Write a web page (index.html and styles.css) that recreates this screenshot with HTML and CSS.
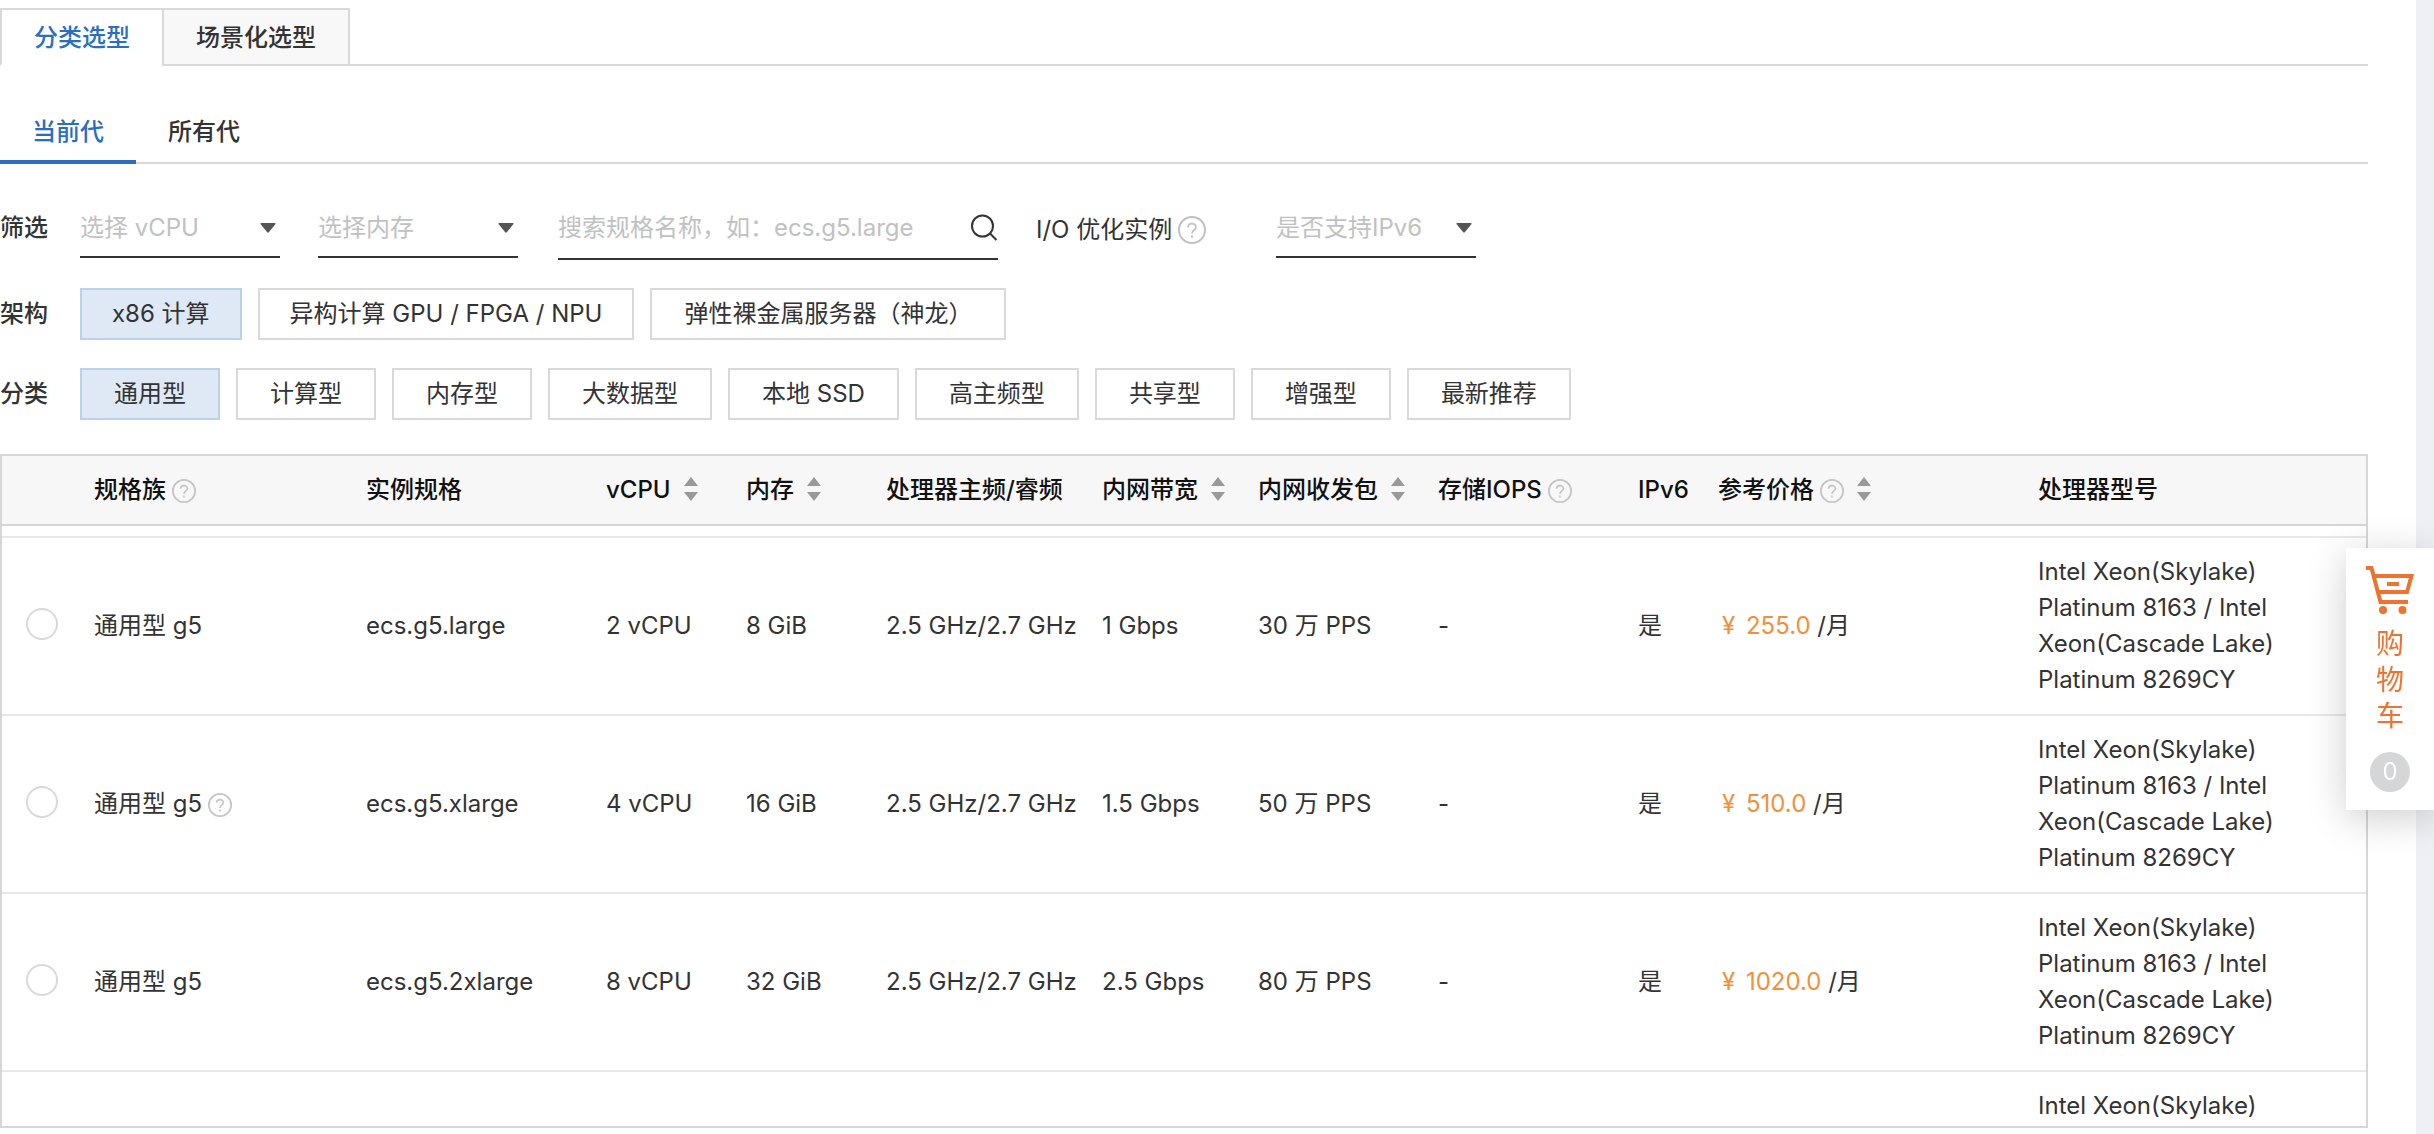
FILE: index.html
```html
<!DOCTYPE html>
<html lang="zh-CN">
<head>
<meta charset="utf-8">
<meta name="viewport" content="width=device-width, initial-scale=1">
<title>实例规格</title>
<link rel="stylesheet" href="styles.css">
</head>
<body>
<svg width="0" height="0" class="sprite" aria-hidden="true">
  <symbol id="help" viewBox="0 0 28 28">
    <circle cx="14" cy="14" r="13" fill="none" stroke="currentColor" stroke-width="2"/>
    <path d="M10 11.5C10 6.500 18 6.500 18 11.200C18 14 14 14 14 17.500" fill="none" stroke="currentColor" stroke-width="1.800"/>
    <circle cx="14" cy="20.500" r="1.200" fill="currentColor"/>
  </symbol>
  <symbol id="sort" viewBox="0 0 14 24">
    <path d="M7 0L14 9H0ZM7 24L0 15H14Z" fill="currentColor"/>
  </symbol>
  <symbol id="caret" viewBox="0 0 16 10">
    <path d="M1 0H15Q16 0 15.500 1L9 9Q8 10.500 7 9L0.500 1Q0 0 1 0Z" fill="currentColor"/>
  </symbol>
</svg>

<main class="page">
  <nav class="tabs">
    <button class="tab tab-active" type="button">分类选型</button>
    <button class="tab" type="button">场景化选型</button>
  </nav>
  <nav class="subtabs">
    <button class="subtab subtab-active" type="button">当前代</button>
    <button class="subtab" type="button">所有代</button>
  </nav>

  <section class="filters">
    <div class="row row-filter">
      <label class="row-label" for="vcpu">筛选</label>
      <div class="select">
        <select id="vcpu"><option>选择 vCPU</option></select>
        <svg class="caret"><use href="#caret"/></svg>
      </div>
      <div class="select">
        <select aria-label="选择内存"><option>选择内存</option></select>
        <svg class="caret"><use href="#caret"/></svg>
      </div>
      <div class="search">
        <input type="text" placeholder="搜索规格名称，如：ecs.g5.large" aria-label="搜索规格名称">
        <button class="search-button" type="button" aria-label="搜索">
          <svg width="28" height="28" viewBox="0 0 28 28" fill="none" stroke="#333" stroke-width="2"><circle cx="12.500" cy="12" r="10.500"/><path d="M20 19.500L26.500 26"/></svg>
        </button>
      </div>
      <div class="io">I/O 优化实例<svg class="help-lg"><use href="#help"/></svg></div>
      <div class="select">
        <select aria-label="是否支持IPv6"><option>是否支持IPv6</option></select>
        <svg class="caret"><use href="#caret"/></svg>
      </div>
    </div>
    <div class="row">
      <span class="row-label">架构</span>
      <div class="chips">
        <button class="chip chip-mixed chip-active" type="button">x86 计算</button>
        <button class="chip chip-mixed" type="button">异构计算 GPU / FPGA / NPU</button>
        <button class="chip" type="button">弹性裸金属服务器（神龙）</button>
      </div>
    </div>
    <div class="row">
      <span class="row-label">分类</span>
      <div class="chips">
        <button class="chip chip-active" type="button">通用型</button>
        <button class="chip" type="button">计算型</button>
        <button class="chip" type="button">内存型</button>
        <button class="chip" type="button">大数据型</button>
        <button class="chip" type="button">本地 SSD</button>
        <button class="chip" type="button">高主频型</button>
        <button class="chip" type="button">共享型</button>
        <button class="chip" type="button">增强型</button>
        <button class="chip" type="button">最新推荐</button>
      </div>
    </div>
  </section>

  <div class="table-box">
    <table class="specs">
      <colgroup>
        <col class="c-radio"><col class="c-family"><col class="c-spec"><col class="c-small"><col class="c-small"><col class="c-freq"><col class="c-band"><col class="c-pps"><col class="c-iops"><col class="c-ipv6"><col class="c-price"><col>
      </colgroup>
      <thead>
        <tr>
          <th></th>
          <th>规格族<svg class="help"><use href="#help"/></svg></th>
          <th>实例规格</th>
          <th>vCPU<svg class="sort"><use href="#sort"/></svg></th>
          <th>内存<svg class="sort"><use href="#sort"/></svg></th>
          <th>处理器主频/睿频</th>
          <th>内网带宽<svg class="sort"><use href="#sort"/></svg></th>
          <th>内网收发包<svg class="sort"><use href="#sort"/></svg></th>
          <th>存储IOPS<svg class="help"><use href="#help"/></svg></th>
          <th>IPv6</th>
          <th>参考价格<svg class="help"><use href="#help"/></svg><svg class="sort"><use href="#sort"/></svg></th>
          <th>处理器型号</th>
        </tr>
      </thead>
      <tbody>
        <tr class="row-edge"><td colspan="12"></td></tr>
        <tr>
          <td><input type="radio" name="spec" aria-label="ecs.g5.large"></td>
          <td>通用型 g5</td>
          <td>ecs.g5.large</td>
          <td>2 vCPU</td>
          <td>8 GiB</td>
          <td>2.5 GHz/2.7 GHz</td>
          <td>1 Gbps</td>
          <td>30 万 PPS</td>
          <td>-</td>
          <td>是</td>
          <td><span class="price"><span class="yen">¥</span> 255.0</span> /月</td>
          <td class="cpu">Intel Xeon(Skylake) Platinum 8163 / Intel Xeon(Cascade Lake) Platinum 8269CY</td>
        </tr>
        <tr>
          <td><input type="radio" name="spec" aria-label="ecs.g5.xlarge"></td>
          <td>通用型 g5<svg class="help"><use href="#help"/></svg></td>
          <td>ecs.g5.xlarge</td>
          <td>4 vCPU</td>
          <td>16 GiB</td>
          <td>2.5 GHz/2.7 GHz</td>
          <td>1.5 Gbps</td>
          <td>50 万 PPS</td>
          <td>-</td>
          <td>是</td>
          <td><span class="price"><span class="yen">¥</span> 510.0</span> /月</td>
          <td class="cpu">Intel Xeon(Skylake) Platinum 8163 / Intel Xeon(Cascade Lake) Platinum 8269CY</td>
        </tr>
        <tr>
          <td><input type="radio" name="spec" aria-label="ecs.g5.2xlarge"></td>
          <td>通用型 g5</td>
          <td>ecs.g5.2xlarge</td>
          <td>8 vCPU</td>
          <td>32 GiB</td>
          <td>2.5 GHz/2.7 GHz</td>
          <td>2.5 Gbps</td>
          <td>80 万 PPS</td>
          <td>-</td>
          <td>是</td>
          <td><span class="price"><span class="yen">¥</span> 1020.0</span> /月</td>
          <td class="cpu">Intel Xeon(Skylake) Platinum 8163 / Intel Xeon(Cascade Lake) Platinum 8269CY</td>
        </tr>
        <tr class="row-last">
          <td colspan="11"></td>
          <td class="cpu">Intel Xeon(Skylake)</td>
        </tr>
      </tbody>
    </table>
  </div>
</main>

<a class="cart" href="#cart">
  <svg width="48" height="48" viewBox="0 0 48 48" fill="none" stroke="#ec7330" stroke-width="4">
    <path d="M0 2H5.500L14.500 36H42"/>
    <path d="M8 10H45.500L41 26H12"/>
    <path d="M21 18H33"/>
    <g fill="#ec7330" stroke="none"><circle cx="17" cy="44" r="4"/><circle cx="36.500" cy="44" r="4"/></g>
  </svg>
  <span class="cart-text">购物车</span>
  <span class="cart-count">0</span>
</a>
</body>
</html>
```
FILE: styles.css
```css
* {
  box-sizing: border-box;
}

body {
  margin: 0;
  min-height: 100vh;
  background: #fff;
  border-right: 18px solid #eef0f5;
  color: #333;
  font-family: Inter, "Noto Sans CJK SC", sans-serif;
  font-size: 24px;
  line-height: 36px;
}

button,
input,
select {
  margin: 0;
  padding: 0;
  border: 0;
  background: none;
  color: inherit;
  font: inherit;
}

.sprite {
  position: absolute;
}

.page {
  padding: 8px 48px 0 0;
}

/* Tabs */
.tabs {
  display: flex;
  height: 58px;
  background: linear-gradient(#d9d9d9, #d9d9d9) bottom / 100% 2px no-repeat;
}

.tab {
  padding: 2px 32px 0;
  border: 2px solid #d9d9d9;
  background: #f8f8f8;
  font-weight: 500;
}

.tab-active {
  border-right: 0;
  border-bottom-color: #fff;
  background: #fff;
  color: #2a6ebf;
}

.subtabs {
  display: flex;
  height: 62px;
  margin-top: 36px;
  background: linear-gradient(#d9d9d9, #d9d9d9) bottom / 100% 2px no-repeat;
}

.subtab {
  padding: 2px 32px 0;
  border-bottom: 4px solid transparent;
  font-weight: 500;
}

.subtab-active {
  border-bottom-color: #2a6ebf;
  color: #2a6ebf;
}

/* Filters */
.filters {
  display: grid;
  gap: 28px;
  margin: 34px 0;
}

.row {
  display: flex;
  align-items: center;
}

.row-label {
  flex: none;
  width: 80px;
  font-weight: 500;
}

.row-filter {
  align-items: flex-start;
  line-height: 60px;
}

.select {
  display: grid;
  align-items: center;
  width: 200px;
  height: 60px;
  margin-right: 38px;
  border-bottom: 2px solid #333;
  color: #c1c1c1;
}

.select select {
  grid-area: 1 / 1;
  width: 100%;
  height: 58px;
  appearance: none;
}

.caret {
  grid-area: 1 / 1;
  justify-self: end;
  width: 16px;
  height: 10px;
  margin: 2px 4px 0 0;
  color: #555;
  pointer-events: none;
}

.search {
  display: flex;
  align-items: center;
  width: 440px;
  height: 62px;
  margin: 0 38px 0 2px;
  border-bottom: 2px solid #333;
}

.search input {
  flex: 1;
  min-width: 0;
  height: 60px;
}

.search input::placeholder {
  color: #c1c1c1;
  opacity: 1;
}

.search-button {
  display: flex;
}

.io {
  display: flex;
  align-items: center;
  width: 240px;
  height: 62px;
  padding-top: 2px;
}

.help-lg {
  width: 28px;
  height: 28px;
  margin-left: 6px;
  color: #c1c1c1;
}

.chips {
  display: flex;
  flex-wrap: wrap;
  gap: 16px;
}

.chip {
  height: 52px;
  padding: 0 32px;
  border: 2px solid #d9d9d9;
}

.chip-mixed {
  padding: 0 30px;
}

.chip-active {
  border-color: #b9d2ea;
  background: #dfe9f6;
}

/* Specification table */
.table-box {
  border: 2px solid #d6d6d6;
}

.specs {
  width: 100%;
  border-spacing: 0;
  table-layout: fixed;
}

.c-radio { width: 76px; }
.c-family { width: 272px; }
.c-spec { width: 240px; }
.c-small { width: 140px; }
.c-freq { width: 216px; }
.c-band { width: 156px; }
.c-pps { width: 180px; }
.c-iops { width: 200px; }
.c-ipv6 { width: 80px; }
.c-price { width: 320px; }

.specs th {
  height: 70px;
  padding: 0 0 0 16px;
  border-bottom: 2px solid #d6d6d6;
  background: #f7f7f7;
  color: #111;
  font-weight: 500;
  text-align: left;
  white-space: nowrap;
}

.specs td {
  padding: 16px 0 16px 16px;
  border-bottom: 2px solid #e8e8e8;
  white-space: nowrap;
}

.specs .cpu {
  padding-right: 64px;
  white-space: normal;
}

.specs .row-edge td {
  height: 12px;
  padding: 0;
}

.specs .row-last td {
  padding-bottom: 2px;
  border-bottom: 0;
}

.help {
  width: 24px;
  height: 24px;
  margin-left: 6px;
  vertical-align: -5px;
  color: #c4c4c4;
}

.sort {
  width: 14px;
  height: 24px;
  margin-left: 13px;
  vertical-align: -3px;
  color: #999;
}

.specs input {
  display: block;
  width: 32px;
  height: 32px;
  margin: 0 0 4px 8px;
  border: 2px solid #d9d9d9;
  border-radius: 50%;
  appearance: none;
}

.price {
  margin-left: 4px;
  color: #f0913a;
}

.yen {
  margin-right: 4px;
}

/* Floating cart */
.cart {
  position: fixed;
  top: 548px;
  right: 0;
  display: flex;
  flex-direction: column;
  align-items: center;
  width: 88px;
  padding: 18px 0;
  background: #fff;
  box-shadow: 0 8px 40px rgba(0, 0, 0, 0.2);
  color: #ec7330;
  text-decoration: none;
}

.cart-text {
  width: 28px;
  margin: 12px 0 18px;
  font-size: 28px;
  text-align: center;
}

.cart-count {
  width: 40px;
  height: 40px;
  border-radius: 50%;
  background: #d5d6d8;
  color: #fff;
  line-height: 40px;
  text-align: center;
}
```
